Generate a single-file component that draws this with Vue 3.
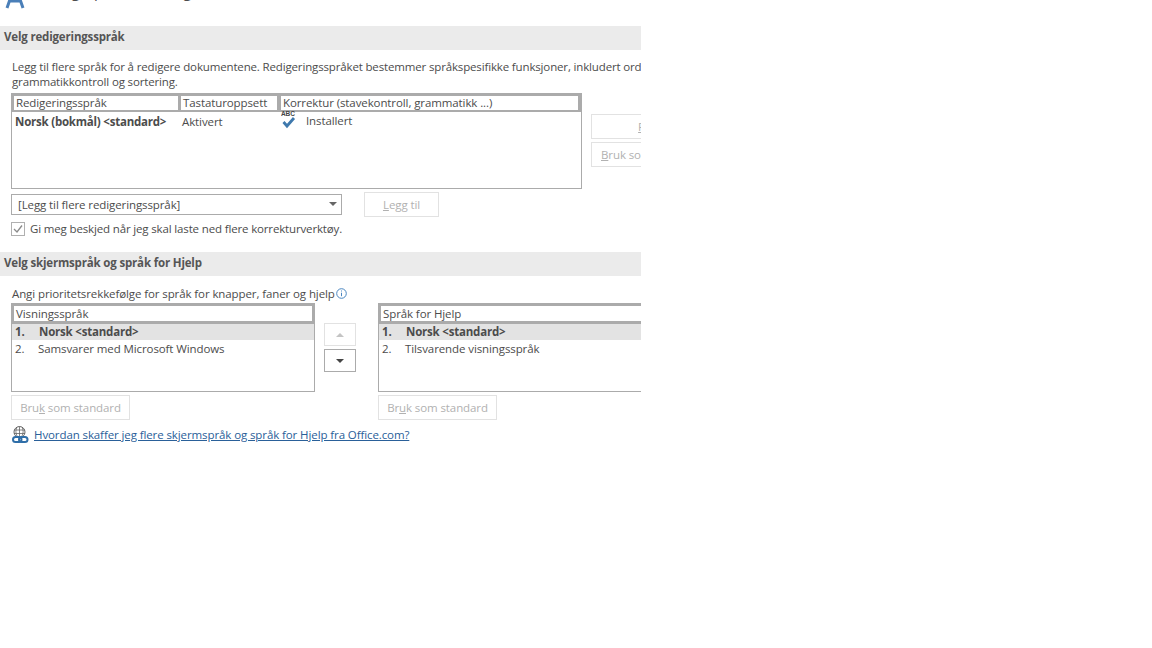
<script setup>
const editingRows = [{ lang: 'Norsk (bokmål) <standard>', kb: 'Aktivert', proof: 'Installert' }]
const displayRows = ['Norsk <standard>', 'Samsvarer med Microsoft Windows']
const helpRows = ['Norsk <standard>', 'Tilsvarende visningsspråk']
</script>

<template>
  <div class="page">
    <header class="top">
      <svg class="a-icon" width="20" height="30" viewBox="0 0 20 30"><path d="M2 29 9 9h2l7 20M5 22h10" fill="none" stroke="#4a7fb8" stroke-width="3"/></svg>
      <span class="top-title">Angi språkinnstillinger for Office.</span>
    </header>

    <h2 class="bar">Velg redigeringsspråk</h2>
    <p class="intro">Legg til flere språk for å redigere dokumentene. Redigeringsspråket bestemmer språkspesifikke funksjoner, inkludert ordbøker,<br>grammatikkontroll og sortering.</p>

    <div class="edit-row">
      <div class="edit-table">
        <div class="edit-head">
          <div class="hcell c1">Redigeringsspråk</div>
          <div class="hcell c2">Tastaturoppsett</div>
          <div class="hcell c3">Korrektur (stavekontroll, grammatikk ...)</div>
        </div>
        <div v-for="r in editingRows" :key="r.lang" class="edit-line">
          <b class="d1">{{ r.lang }}</b>
          <span class="d2">{{ r.kb }}</span>
          <span class="d3">
            <svg class="abc" width="16" height="19" viewBox="0 0 16 19">
              <text x="0" y="6" font-size="6.5" font-weight="700" font-family="Liberation Sans, sans-serif" fill="#444">ABC</text>
              <path d="M2.5 12 6 16l7-8" fill="none" stroke="#3f79ad" stroke-width="2.8"/>
            </svg>
            {{ r.proof }}
          </span>
        </div>
      </div>
      <div class="side">
        <button class="btn side-btn" disabled><u class="remove">F</u></button>
        <button class="btn side-btn left" disabled><u>B</u>ruk som standard</button>
      </div>
    </div>

    <div class="add-row">
      <div class="select">[Legg til flere redigeringsspråk]<i class="caret"></i></div>
      <button class="btn add" disabled><u>L</u>egg til</button>
    </div>

    <label class="check">
      <svg class="box" width="14" height="14" viewBox="0 0 14 14"><rect x=".5" y=".5" width="13" height="13" fill="#fff" stroke="#b0b0b0"/><path d="m3 7 3 3 5-6.500" fill="none" stroke="#8a8a8a" stroke-width="1.300"/></svg>
      Gi meg beskjed når jeg skal laste ned flere korrekturverktøy.
    </label>

    <h2 class="bar second">Velg skjermspråk og språk for Hjelp</h2>
    <p class="intro2">Angi prioritetsrekkefølge for språk for knapper, faner og hjelp<svg class="info" width="11" height="11" viewBox="0 0 11 11"><circle cx="5.500" cy="5.500" r="4.800" fill="none" stroke="#4a86c0"/><path d="M5.500 2.500v1M5.500 4.700v3.500" stroke="#4a86c0"/></svg></p>

    <div class="lists">
      <div class="col col-a">
        <div class="list">
          <div class="lhead">Visningsspråk</div>
          <div v-for="(t, i) in displayRows" :key="t" class="lrow" :class="{ sel: i === 0 }"><span class="n">{{ i + 1 }}.</span>{{ t }}</div>
        </div>
        <button class="btn std" disabled>Bru<u>k</u> som standard</button>
      </div>
      <div class="arrows">
        <button class="btn arrow" disabled><i class="up"></i></button>
        <button class="btn arrow on"><i class="down"></i></button>
      </div>
      <div class="col col-b">
        <div class="list">
          <div class="lhead">Språk for Hjelp</div>
          <div v-for="(t, i) in helpRows" :key="t" class="lrow" :class="{ sel: i === 0 }"><span class="n">{{ i + 1 }}.</span>{{ t }}</div>
        </div>
        <button class="btn std" disabled>Br<u>u</u>k som standard</button>
      </div>
    </div>

    <div class="link-row">
      <svg class="globe" width="17" height="17" viewBox="0 0 17 17">
        <circle cx="7.500" cy="6" r="5.500" fill="none" stroke="#666"/>
        <path d="M2 4h11M2 7.500h11M7.500 .5v10M5 1c-1.500 3-1.500 6 0 9M10 1c1.500 3 1.500 6 0 9" fill="none" stroke="#666" stroke-width=".8"/>
        <rect x="1" y="11" width="8.500" height="5" rx="2.500" fill="#fff" stroke="#2f6ea8" stroke-width="2"/>
        <rect x="7" y="11" width="8.500" height="5" rx="2.500" fill="none" stroke="#2f6ea8" stroke-width="2"/>
      </svg>
      <a href="#" class="link">Hvordan skaffer jeg flere skjermspråk og språk for Hjelp fra Office.com?</a>
    </div>
  </div>
</template>

<style>
html, body { background: #fff; margin: 0; }
</style>

<style scoped>
.page {
  width: 641px;
  height: 648px;
  overflow: hidden;
  font-family: "Open Sans", "Noto Sans", sans-serif;
  font-size: 11.5px;
  letter-spacing: -0.1px;
  color: #4c4c4c;
  line-height: 15px;
}
.top { margin-top: -19px; display: flex; height: 45px; }
.a-icon { margin: -2px 0 0 5px; flex: none; }
.top-title { margin-left: 28px; font-size: 15px; line-height: 20px; white-space: nowrap; }
.bar {
  margin: 0; height: 24px; background: #ebebeb; padding-left: 4px;
  font-size: 11.5px; font-weight: 700; line-height: 22px; color: #555; letter-spacing: -0.17px;
}
.intro { margin: 9px 0 0 12px; width: 640px; white-space: nowrap; height: 34px; letter-spacing: -0.15px; }
.edit-row { display: flex; margin-left: 11px; }
.edit-table { width: 571px; height: 96px; box-sizing: border-box; border: 1px solid #ababab; flex: none; }
.edit-head { display: flex; height: 19px; margin: -1px -1px 0; background: #ababab; padding: 3px 4px 2px 3px; box-sizing: border-box; gap: 3px; }
.hcell { box-sizing: border-box; background: #fff; height: 14px; padding-left: 2px; line-height: 14px; }
.c1 { width: 164px; }
.c2 { width: 96px; margin-right: 1px; }
.c3 { flex: 1; }
.edit-line { display: flex; padding-top: 2px; line-height: 15px; }
.d1 { width: 167px; padding-left: 3px; box-sizing: border-box; letter-spacing: -0.22px; }
.d2 { width: 99px; padding-left: 3px; box-sizing: border-box; }
.d3 { display: flex; padding-left: 3px; margin-top: -1px; }
.abc { margin: -3px 9px 0 0; }
.side { display: flex; flex-direction: column; margin: 21px 0 0 9px; gap: 3px; }
.btn {
  box-sizing: border-box; background: #fff; border: 1px solid #e2e2e2; color: #b1b1b1;
  font: inherit; letter-spacing: inherit; padding: 0; white-space: nowrap; display: block;
}
.side-btn { width: 100px; height: 25px; }
.side-btn.left { text-align: left; padding-left: 9px; }
.add-row { display: flex; align-items: center; margin: 3px 0 0 11px; }
.select {
  box-sizing: border-box; width: 331px; height: 21px; border: 1px solid #ababab; padding-left: 6px;
  line-height: 19px; position: relative;
}
.caret { position: absolute; right: 4px; top: 7px; border: 4px solid transparent; border-top: 4px solid #666; border-bottom: 0; }
.add { width: 75px; height: 25px; margin-left: 22px; }
.check { display: flex; align-items: center; gap: 5px; margin: 4px 0 0 11px; height: 15px; letter-spacing: -0.15px; }
.box { flex: none; }
.second { margin-top: 16px; }
.intro2 { margin: 10px 0 0 12px; height: 17px; white-space: nowrap; }
.info { margin-left: 1px; vertical-align: -1px; }
.lists { display: flex; margin-left: 11px; }
.col { flex: none; }
.col-a { width: 304px; }
.col-b { width: 304px; }
.list { box-sizing: border-box; height: 89px; border: 1px solid #ababab; }
.lhead { box-sizing: border-box; margin: -1px -1px 0; height: 21px; border: 3px solid #ababab; padding-left: 2px; line-height: 15px; }
.lrow { display: flex; height: 17px; line-height: 17px; padding-left: 3px; }
.lrow.sel { background: #e3e3e3; font-weight: 700; height: 16px; line-height: 16px; letter-spacing: -0.2px; }
.n { width: 23px; flex: none; }
.sel .n { width: 24px; }
.std { width: 119px; height: 25px; margin-top: 3px; }
.arrows { width: 63px; flex: none; padding: 20px 0 0 9px; box-sizing: border-box; }
.arrow { width: 32px; height: 23px; display: flex; align-items: center; justify-content: center; }
.arrow + .arrow { margin-top: 3px; }
.arrow.on { border-color: #ababab; }
.up { border: 4px solid transparent; border-bottom: 4px solid #c4c4c4; border-top: 0; }
.down { border: 4px solid transparent; border-top: 4px solid #444; border-bottom: 0; }
.link-row { display: flex; align-items: center; gap: 5px; margin: 6px 0 0 12px; }
.link { color: #2a6099; text-decoration: underline; }
</style>
